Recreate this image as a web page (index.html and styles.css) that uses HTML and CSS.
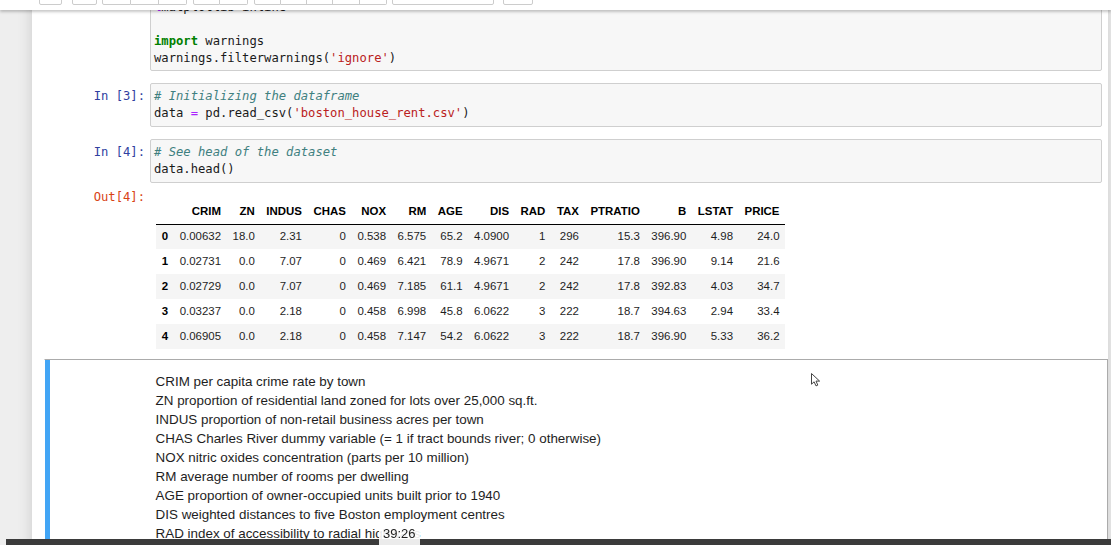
FILE: index.html
```html
<!DOCTYPE html>
<html>
<head>
<meta charset="utf-8">
<title>Notebook</title>
<link rel="stylesheet" href="styles.css">
</head>
<body>
<header class="header">
  <div class="toolbar">
    <div class="btn w23"></div>
    <div class="btn w25 ml10"></div>
    <div class="group ml5"><div class="btn w29"></div><div class="btn w28"></div><div class="btn w28"></div></div>
    <div class="group ml6"><div class="btn w27"></div><div class="btn w28"></div></div>
    <div class="group ml6"><div class="btn w27"></div><div class="btn w26"></div><div class="btn w26"></div><div class="btn w27"></div><div class="btn w27"></div></div>
    <div class="btn w102 ml5"></div>
    <div class="btn w30 ml9"></div>
  </div>
</header>

<main class="notebook">
  <div class="cell">
    <div class="row">
      <div class="prompt">In [2]:</div>
      <div class="input-area first"><pre class="code"><span class="kw">import</span> numpy <span class="kw">as</span> np
<span class="kw">import</span> pandas <span class="kw">as</span> pd
<span class="kw">import</span> matplotlib.pyplot <span class="kw">as</span> plt
<span class="kw">import</span> seaborn <span class="kw">as</span> sns
<span class="op">%</span>matplotlib inline

<span class="kw">import</span> warnings
warnings.filterwarnings(<span class="str">'ignore'</span>)</pre></div>
    </div>
  </div>

  <div class="cell">
    <div class="row">
      <div class="prompt">In [3]:</div>
      <div class="input-area"><pre class="code"><span class="cm"># Initializing the dataframe</span>
data <span class="op">=</span> pd.read_csv(<span class="str">'boston_house_rent.csv'</span>)</pre></div>
    </div>
  </div>

  <div class="cell">
    <div class="row">
      <div class="prompt">In [4]:</div>
      <div class="input-area"><pre class="code"><span class="cm"># See head of the dataset</span>
data.head()</pre></div>
    </div>
    <div class="row">
      <div class="prompt out">Out[4]:</div>
      <div class="out-sub">
        <table class="df">
          <thead>
            <tr><th></th><th>CRIM</th><th>ZN</th><th>INDUS</th><th>CHAS</th><th>NOX</th><th>RM</th><th>AGE</th><th>DIS</th><th>RAD</th><th>TAX</th><th>PTRATIO</th><th>B</th><th>LSTAT</th><th>PRICE</th></tr>
          </thead>
          <tbody>
            <tr><th>0</th><td>0.00632</td><td>18.0</td><td>2.31</td><td>0</td><td>0.538</td><td>6.575</td><td>65.2</td><td>4.0900</td><td>1</td><td>296</td><td>15.3</td><td>396.90</td><td>4.98</td><td>24.0</td></tr>
            <tr><th>1</th><td>0.02731</td><td>0.0</td><td>7.07</td><td>0</td><td>0.469</td><td>6.421</td><td>78.9</td><td>4.9671</td><td>2</td><td>242</td><td>17.8</td><td>396.90</td><td>9.14</td><td>21.6</td></tr>
            <tr><th>2</th><td>0.02729</td><td>0.0</td><td>7.07</td><td>0</td><td>0.469</td><td>7.185</td><td>61.1</td><td>4.9671</td><td>2</td><td>242</td><td>17.8</td><td>392.83</td><td>4.03</td><td>34.7</td></tr>
            <tr><th>3</th><td>0.03237</td><td>0.0</td><td>2.18</td><td>0</td><td>0.458</td><td>6.998</td><td>45.8</td><td>6.0622</td><td>3</td><td>222</td><td>18.7</td><td>394.63</td><td>2.94</td><td>33.4</td></tr>
            <tr><th>4</th><td>0.06905</td><td>0.0</td><td>2.18</td><td>0</td><td>0.458</td><td>7.147</td><td>54.2</td><td>6.0622</td><td>3</td><td>222</td><td>18.7</td><td>396.90</td><td>5.33</td><td>36.2</td></tr>
          </tbody>
        </table>
      </div>
    </div>
  </div>

  <div class="cell selected">
    <div class="row">
      <div class="prompt"></div>
      <div class="md-render">
        CRIM per capita crime rate by town<br>
        ZN proportion of residential land zoned for lots over 25,000 sq.ft.<br>
        INDUS proportion of non-retail business acres per town<br>
        CHAS Charles River dummy variable (= 1 if tract bounds river; 0 otherwise)<br>
        NOX nitric oxides concentration (parts per 10 million)<br>
        RM average number of rooms per dwelling<br>
        AGE proportion of owner-occupied units built prior to 1940<br>
        DIS weighted distances to five Boston employment centres<br>
        RAD index of accessibility to radial highways<br>
        TAX full-value property-tax rate per $10,000<br>
        PTRATIO pupil-teacher ratio by town<br>
        B 1000(Bk - 0.63)^2 where Bk is the proportion of blacks by town<br>
        LSTAT % lower status of the population<br>
        PRICE Median value of owner-occupied homes in $1000's
      </div>
    </div>
  </div>
</main>

<div class="player-bar"></div>
<div class="time-tip">39:26</div>

<svg class="cursor" width="11" height="14" viewBox="0 0 11 14">
  <path d="M0.5 0.5 L0.5 11.2 L3.1 8.8 L5 12.9 L6.8 12.1 L5 8.1 L8.6 8.1 Z" fill="#fff" stroke="#444" stroke-width="1" stroke-linejoin="round"/>
</svg>
</body>
</html>
```

FILE: styles.css
```css
* { box-sizing: border-box; }

html, body {
  margin: 0;
  height: 100%;
  overflow: hidden;
}

body {
  background: #eeeeee;
  font-family: "Liberation Sans", Arial, sans-serif;
}

/* ---------- header / toolbar ---------- */
.header {
  position: fixed;
  top: 0;
  left: 0;
  right: 0;
  height: 10px;
  background: #fff;
  box-shadow: 0 2px 3px rgba(0, 0, 0, 0.22);
  z-index: 5;
}

.toolbar {
  display: flex;
  align-items: flex-end;
  height: 10px;
  overflow: hidden;
  padding: 0 0 5px 39px;
}

.btn {
  flex: none;
  height: 24px;
  background: #fff;
  border: 1px solid #cccccc;
  border-radius: 2px;
}

.group {
  display: flex;
  flex: none;
}

.group .btn { border-radius: 0; }
.group .btn + .btn { border-left: none; }
.group .btn:first-child { border-radius: 2px 0 0 2px; }
.group .btn:last-child { border-radius: 0 2px 2px 0; }

.ml5 { margin-left: 5px; }
.ml6 { margin-left: 6px; }
.ml9 { margin-left: 9px; }
.ml10 { margin-left: 10px; }

.w23 { width: 23px; }
.w25 { width: 25px; }
.w26 { width: 26px; }
.w27 { width: 27px; }
.w28 { width: 28px; }
.w29 { width: 29px; }
.w30 { width: 30px; }
.w102 { width: 102px; }

/* ---------- notebook ---------- */
.notebook {
  display: block;
  margin: -81px 0 0 32px;
  width: 1076px;
  min-height: 800px;
  padding-left: 12px;
  background: #fff;
  box-shadow: 0 0 12px 1px rgba(87, 87, 87, 0.2);
}

.cell {
  border: 1px solid transparent;
  padding: 5px;
}

.row {
  display: flex;
}

.prompt {
  flex: none;
  width: 100px;
  padding: 5px 5px 0 0;
  text-align: right;
  font-family: "DejaVu Sans Mono", monospace;
  font-size: 12.2px;
  line-height: 17px;
  color: #303f9f;
}

.prompt.out {
  color: #d84315;
  padding-top: 6px;
}

.input-area {
  flex: 1;
  min-width: 0;
  background: #f7f7f7;
  border: 1px solid #cfcfcf;
  border-radius: 2px;
  padding: 4px 3px;
}

.input-area.first {
  padding-top: 5px;
  padding-bottom: 3px;
}

.code {
  margin: 0;
  font-family: "DejaVu Sans Mono", monospace;
  font-size: 12.2px;
  line-height: 17px;
  color: #1a1a1a;
  white-space: pre;
}

.kw { color: #008000; font-weight: bold; }
.str { color: #ba2121; }
.cm { color: #408080; font-style: italic; }
.op { color: #aa22ff; }

/* ---------- dataframe output ---------- */
.out-sub {
  flex: 1;
  padding: 16px 0 4px 6px;
}

.df {
  border-collapse: collapse;
  border-spacing: 0;
  font-size: 11.45px;
  color: #000;
}

.df th,
.df td {
  height: 25px;
  padding: 0 5.78px;
  line-height: 13px;
  text-align: right;
  vertical-align: middle;
  white-space: nowrap;
}

.df td { color: #1e1e1e; }

.df thead { border-bottom: 1px solid #000; }

.df tbody tr:nth-child(odd) { background: #f5f5f5; }

/* ---------- markdown cell ---------- */
.cell.selected {
  border-color: #ababab;
  border-left-color: transparent;
  box-shadow: inset 5px 0 0 #42a5f5;
}

.md-render {
  flex: 1;
  padding: 6.5px 0 0 5.6px;
  font-size: 13.4px;
  line-height: 19px;
  color: #1e1e1e;
}

/* ---------- video player overlay ---------- */
.player-bar {
  position: fixed;
  left: 6px;
  right: 0;
  bottom: 0;
  height: 6px;
  background: #3b3b3b;
  z-index: 6;
}

.time-tip {
  position: fixed;
  left: 379px;
  bottom: 0;
  width: 41px;
  height: 18px;
  padding-left: 4px;
  background: rgba(255, 255, 255, 0.9);
  font-family: "Liberation Sans", Arial, sans-serif;
  font-size: 13px;
  line-height: 13px;
  color: #222;
  z-index: 7;
}

.cursor {
  position: fixed;
  left: 811px;
  top: 373px;
  z-index: 8;
}
```
